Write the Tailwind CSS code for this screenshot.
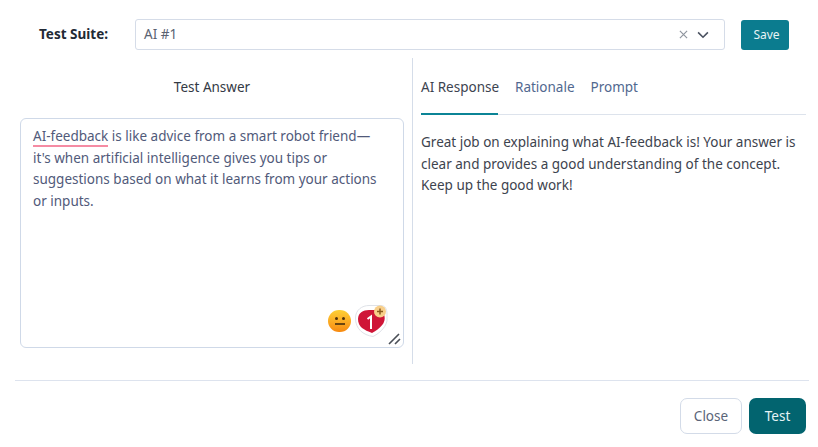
<!DOCTYPE html>
<html><head><meta charset="utf-8"><script src="https://cdn.jsdelivr.net/npm/@tailwindcss/browser@4"></script></head>
<body class="bg-white overflow-hidden">
<div class="w-[818px] h-[447px] font-['Noto_Sans',sans-serif] text-[14px] pt-[19px] overflow-hidden">
  <div class="flex items-center h-[31px] pl-[39px]">
    <div class="w-[96px] font-bold text-[13.5px] text-[#222a35]">Test Suite:</div>
    <div class="w-[590px] h-[31px] border border-[#d5dce8] rounded-[3px] flex items-center pl-[8px] pr-[15px] text-[#5a6272] text-[13.5px]">
      <span class="flex-1">AI #1</span>
      <svg class="w-[9px] h-[9px] mr-[9px]" viewBox="0 0 10 10" fill="none" stroke="#8f959e" stroke-width="1.3"><path d="M1 1l8 8M9 1l-8 8"/></svg>
      <svg class="w-[12px] h-[8px]" viewBox="0 0 13 9" fill="none" stroke="#4a5160" stroke-width="1.8"><path d="M1 1.5l5.5 5.5 5.5-5.5"/></svg>
    </div>
    <button class="ml-[16px] w-[48px] h-[30px] rounded-[3px] bg-[#0b7c8f] text-[#e6f3f5] text-[12px] pl-[3px]">Save</button>
  </div>
  <div class="flex h-[306px] mt-[8px] ml-[15px]">
    <div class="w-[397px] pl-[5px] pr-[8px]">
      <div class="h-[60px] pt-[19px] text-center text-[13.5px] leading-[20px] text-[#333a45]">Test Answer</div>
      <div class="relative h-[230px] border border-[#cfd9e8] rounded-[6px] pl-[12px] pr-[16px] pt-[7px] text-[13.5px] leading-[21.5px] text-[#515a7a]">
        <span class="border-b-2 border-[#f58ba3]">AI-feedback</span> is like advice from a smart robot friend— it's when artificial intelligence gives you tips or suggestions based on what it learns from your actions or inputs.
        <div class="absolute left-[307px] top-[191px] w-[23px] h-[22px] rounded-full bg-gradient-to-b from-[#fdd035] to-[#f7890f] flex flex-col items-center pt-[7px]">
          <div class="flex gap-[4px]"><i class="w-[3px] h-[3px] rounded-full bg-[#51330c] block"></i><i class="w-[3px] h-[3px] rounded-full bg-[#51330c] block"></i></div>
          <i class="w-[10px] h-[2px] bg-[#6b4510] block mt-[3px]"></i>
        </div>
        <svg class="absolute left-[333px] top-[184px] w-[34px] h-[35px]" viewBox="0 0 34 35">
          <path d="M1.5 15C1.5 7 8 2.5 15 2.5H27C31 2.5 33 6 33 11V18C31 26 24 31 19 33.5C9 32 1.5 26 1.5 15z" fill="#fff" stroke="#dfe2e8"/>
          <path d="M4 16C4 10 9 7 15 7H26C31 10 32 16 29 21C26 25 22 28 18 30C10 27 4 24 4 16z" fill="#cf1537"/>
          <path d="M13.5 16l3.5-2.5V26" fill="none" stroke="#fff" stroke-width="2"/>
          <circle cx="26" cy="8.5" r="6" fill="#f8cf8a"/>
          <path d="M26 5.5v6M23 8.5h6" stroke="#8a5a1c" stroke-width="1.5"/>
        </svg>
        <svg class="absolute right-[1px] bottom-[1px] w-[15px] h-[15px]" viewBox="0 0 15 15" fill="none" stroke="#4a4f57" stroke-width="1.6"><path d="M2 13L12 3M8 13l5-5"/></svg>
      </div>
    </div>
    <div class="w-[394px] border-l border-[#d5dde9] pl-[8px]">
      <div class="flex h-[57px] border-b border-[#dde3ec] text-[13.5px]">
        <div class="relative pt-[19px] leading-[20px] text-[#3c4350] w-[77px] whitespace-nowrap">AI Response<i class="absolute left-0 right-0 bottom-[-1px] h-[2px] bg-[#0b8496] block"></i></div>
        <div class="pt-[19px] leading-[20px] text-[#51688f] ml-[17px]">Rationale</div>
        <div class="pt-[19px] leading-[20px] text-[#51688f] ml-[16px]">Prompt</div>
      </div>
      <div class="mt-[17px] text-[13.5px] leading-[21.5px] text-[#3d434e] w-[382px]">Great job on explaining what AI-feedback is! Your answer is clear and provides a good understanding of the concept. Keep up the good work!</div>
    </div>
  </div>
  <div class="ml-[15px] w-[794px] h-px bg-[#dde3ee] mt-[16px]"></div>
  <div class="flex justify-end gap-[7px] mt-[17px] pr-[12px]">
    <button class="w-[62px] h-[36px] rounded-[7px] border border-[#d3dbe8] text-[#5a6478] text-[13.5px]">Close</button>
    <button class="w-[57px] h-[36px] rounded-[7px] bg-[#02646f] text-[#e6f3f5] text-[13.5px]">Test</button>
  </div>
</div>
</body></html>
